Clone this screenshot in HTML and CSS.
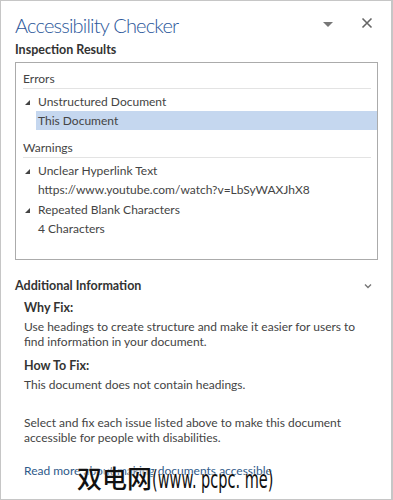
FILE: index.html
```html
<!DOCTYPE html>
<html lang="en">
<head>
    <meta charset="UTF-8">
    <meta name="viewport" content="width=device-width, initial-scale=1.0">
    <title>Accessibility Checker</title>
    <link rel="stylesheet" href="styles.css">
</head>
<body>
    <div class="pane">
        <div class="pane-header">
            <h1 class="pane-title">Accessibility Checker</h1>
            <div class="pane-tools">
                <span class="tool-menu"></span>
                <svg class="tool-close" width="12" height="12" viewBox="0 0 12 12">
                    <path d="M1.5 1.5 L10.5 10.5 M10.5 1.5 L1.5 10.5" stroke="#666" stroke-width="1.6" fill="none"/>
                </svg>
            </div>
        </div>

        <h2 class="section-title">Inspection Results</h2>
        <div class="results">
            <div class="group">
                <div class="group-title">Errors</div>
                <div class="item"><span class="expander"></span>Unstructured Document</div>
                <div class="child selected">This Document</div>
            </div>
            <div class="group">
                <div class="group-title">Warnings</div>
                <div class="item"><span class="expander"></span>Unclear Hyperlink Text</div>
                <div class="child">https://www.youtube.com/watch?v=LbSyWAXJhX8</div>
                <div class="item"><span class="expander"></span>Repeated Blank Characters</div>
                <div class="child">4 Characters</div>
            </div>
        </div>

        <div class="info-header">
            <h2 class="section-title">Additional Information</h2>
            <svg class="chevron" width="8" height="6" viewBox="0 0 8 6">
                <path d="M1 1.5 L4 4.5 L7 1.5" stroke="#777" stroke-width="1.4" fill="none"/>
            </svg>
        </div>
        <div class="info">
            <h3>Why Fix:</h3>
            <p>Use headings to create structure and make it easier for users to find information in your document.</p>
            <h3>How To Fix:</h3>
            <p>This document does not contain headings.</p>
            <p class="note">Select and fix each issue listed above to make this document accessible for people with disabilities.</p>
            <a class="more" href="#">Read more about making documents accessible</a>
        </div>

        <div class="watermark">双电网<span class="watermark-latin">(www. pcpc. me)</span></div>
    </div>
</body>
</html>
```

FILE: styles.css
```css
body {
    margin: 0;
    padding: 0;
    background-color: #fff;
    font-family: 'Lato', 'Open Sans', sans-serif;
    font-size: 12px;
    color: #444;
}

.pane {
    position: relative;
    box-sizing: border-box;
    width: 393px;
    height: 500px;
    border: 1px solid #c6c6c6;
    border-right-width: 2px;
    padding: 0 0 0 14px;
    overflow: hidden;
}

.pane-header {
    display: flex;
    align-items: center;
    justify-content: space-between;
    height: 40px;
    padding-top: 8px;
    box-sizing: border-box;
}

.pane-title {
    margin: 0;
    font-size: 20px;
    font-weight: 300;
    letter-spacing: -0.8px;
    color: #2b579a;
    line-height: 32px;
}

.pane-tools {
    display: flex;
    align-items: center;
    gap: 28px;
    padding-right: 18px;
    margin-top: -4px;
}

.tool-menu {
    width: 0;
    height: 0;
    border-left: 5px solid transparent;
    border-right: 5px solid transparent;
    border-top: 5px solid #777;
    margin-top: 2px;
}

.section-title {
    margin: 0;
    font-size: 12.5px;
    font-weight: 700;
    color: #333;
    line-height: 18px;
}

.results {
    margin: 3px 13px 0 0;
    height: 198px;
    box-sizing: border-box;
    border: 1px solid #ababab;
    padding: 6px 0 0 7px;
}

.group {
    margin-bottom: 8px;
}

.group-title {
    line-height: 19px;
    margin-right: 6px;
    border-bottom: 1px solid #e3e3e3;
    margin-bottom: 3px;
}

.item,
.child {
    line-height: 19px;
    height: 19px;
    white-space: nowrap;
}

.item {
    display: flex;
    align-items: center;
    margin-top: 2px;
}

.child + .item {
    margin-top: 1px;
}

.expander {
    width: 0;
    height: 0;
    border-left: 5px solid transparent;
    border-bottom: 5px solid #444;
    margin: 1px 8px 0 2px;
}

.child {
    padding-left: 15px;
}

.selected {
    background-color: #c5d7ef;
    margin-left: 13px;
    padding-left: 2px;
}

.info-header {
    display: flex;
    align-items: center;
    justify-content: space-between;
    margin-top: 17px;
    padding-right: 19px;
}

.info {
    padding: 0 20px 0 9px;
}

.info h3 {
    margin: 2px 0 0;
    font-size: 12.5px;
    font-weight: 700;
    color: #333;
    line-height: 22px;
}

.info p {
    margin: 0 0 6px;
    line-height: 15px;
}

.info .note {
    margin-top: 23px;
}

.more {
    display: block;
    margin-top: 17px;
    color: #2f5a8a;
    text-decoration: none;
    line-height: 18px;
}

.watermark {
    position: absolute;
    left: 76px;
    top: 461px;
    font-family: 'Noto Sans CJK SC', sans-serif;
    font-size: 25px;
    font-weight: 500;
    line-height: 30px;
    color: #111;
    text-shadow: 0 0 2px #fff, 0 0 2px #fff;
    white-space: nowrap;
}

.watermark-latin {
    display: inline-block;
    font-family: 'DejaVu Sans', sans-serif;
    transform: scaleX(0.58);
    transform-origin: left center;
}
```
